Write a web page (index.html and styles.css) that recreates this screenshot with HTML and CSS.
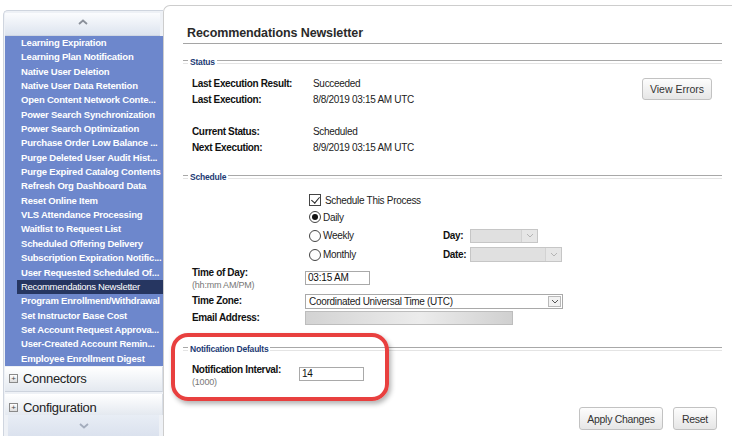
FILE: index.html
```html
<!DOCTYPE html>
<html lang="en">
<head>
    <meta charset="UTF-8">
    <meta name="viewport" content="width=device-width, initial-scale=1.0">
    <title>Recommendations Newsletter</title>
    <link rel="stylesheet" href="styles.css">
</head>
<body>
    <div class="page">
        <div class="sidebar">
            <div class="scroll-up">
                <svg width="10" height="6" viewBox="0 0 10 6"><path d="M1 5 L5 1.5 L9 5" fill="none" stroke="#8b909a" stroke-width="1.8"/></svg>
            </div>
            <ul class="jobs">
                <li>Learning Expiration</li>
                <li>Learning Plan Notification</li>
                <li>Native User Deletion</li>
                <li>Native User Data Retention</li>
                <li>Open Content Network Conte...</li>
                <li>Power Search Synchronization</li>
                <li>Power Search Optimization</li>
                <li>Purchase Order Low Balance ...</li>
                <li>Purge Deleted User Audit Hist...</li>
                <li>Purge Expired Catalog Contents</li>
                <li>Refresh Org Dashboard Data</li>
                <li>Reset Online Item</li>
                <li>VLS Attendance Processing</li>
                <li>Waitlist to Request List</li>
                <li>Scheduled Offering Delivery</li>
                <li>Subscription Expiration Notific...</li>
                <li>User Requested Scheduled Of...</li>
                <li class="active">Recommendations Newsletter</li>
                <li>Program Enrollment/Withdrawal</li>
                <li>Set Instructor Base Cost</li>
                <li>Set Account Request Approva...</li>
                <li>User-Created Account Remin...</li>
                <li>Employee Enrollment Digest</li>
            </ul>
            <div class="group"><span class="plus">+</span>Connectors</div>
            <div class="group cut"><span class="plus">+</span>Configuration</div>
            <div class="scroll-down">
                <svg width="10" height="6" viewBox="0 0 10 6"><path d="M1 1 L5 4.5 L9 1" fill="none" stroke="#a3acbc" stroke-width="1.8"/></svg>
            </div>
        </div>

        <div class="main">
            <h1>Recommendations Newsletter</h1>

            <div class="legend status-legend"><span>Status</span></div>
            <div class="status">
                <div class="rows">
                    <div class="lbl">Last Execution Result:</div><div class="val">Succeeded</div>
                    <div class="lbl">Last Execution:</div><div class="val">8/8/2019 03:15 AM UTC</div>
                    <div class="lbl"></div><div class="val"></div>
                    <div class="lbl">Current Status:</div><div class="val">Scheduled</div>
                    <div class="lbl">Next Execution:</div><div class="val">8/9/2019 03:15 AM UTC</div>
                </div>
                <button class="btn view-errors">View Errors</button>
            </div>

            <div class="legend schedule-legend"><span>Schedule</span></div>
            <div class="schedule">
                <div></div>
                <div class="opt r-check"><span class="check"></span>Schedule This Process</div>
                <div></div>
                <div class="opt r-daily"><span class="radio on"></span>Daily</div>
                <div></div>
                <div class="opt r-weekly">
                    <div class="opt-name"><span class="radio"></span>Weekly</div>
                    <div class="lbl">Day:</div>
                    <div class="dd off day"><span></span><i><svg width="8" height="5" viewBox="0 0 8 5"><path d="M1 1 L4 4 L7 1" fill="none" stroke="#b5b5b5"/></svg></i></div>
                </div>
                <div></div>
                <div class="opt r-monthly">
                    <div class="opt-name"><span class="radio"></span>Monthly</div>
                    <div class="lbl">Date:</div>
                    <div class="dd off date"><span></span><i><svg width="8" height="5" viewBox="0 0 8 5"><path d="M1 1 L4 4 L7 1" fill="none" stroke="#b5b5b5"/></svg></i></div>
                </div>

                <div class="lbl two r-time">Time of Day:<small>(hh:mm AM/PM)</small></div>
                <div class="r-time"><div class="field time">03:15 AM</div></div>

                <div class="lbl r-zone">Time Zone:</div>
                <div class="r-zone"><div class="dd zone"><span>Coordinated Universal Time (UTC)</span><i><svg width="8" height="5" viewBox="0 0 8 5"><path d="M1 1 L4 4 L7 1" fill="none" stroke="#555"/></svg></i></div></div>

                <div class="lbl r-mail">Email Address:</div>
                <div class="r-mail"><div class="field mail"></div></div>
            </div>

            <div class="legend notify-legend"><span>Notification Defaults</span></div>
            <div class="notify">
                <div class="lbl two">Notification Interval:<small>(1000)</small></div>
                <div><div class="field interval">14</div></div>
            </div>

            <div class="actions">
                <button class="btn">Apply Changes</button>
                <button class="btn">Reset</button>
            </div>
        </div>

        <div class="callout"></div>
    </div>
</body>
</html>
```

FILE: styles.css
```css
* {
    padding: 0;
    margin: 0;
    box-sizing: border-box;
}
body {
    width: 732px;
    height: 436px;
    overflow: hidden;
    background: #fff;
    font-family: "Liberation Sans", Arial, sans-serif;
    color: #1a1a1a;
}
.page {
    position: relative;
    display: flex;
    height: 436px;
}

/* left menu */
.sidebar {
    width: 160px;
    margin: 10px 0 0 3px;
    padding: 2px 0 0 1px;
    border-top: 1px solid #cfd5df;
    border-left: 1px solid #cfd5df;
    border-top-left-radius: 5px;
    background: #eef1f6;
    display: flex;
    flex-direction: column;
    overflow: hidden;
}
.scroll-up {
    height: 23px;
    margin-right: 3px;
    background: linear-gradient(#fbfcfe, #dde4ef);
    border-bottom: 1px solid #d0d7e3;
    display: flex;
    justify-content: center;
    padding-top: 6px;
}
.jobs {
    list-style: none;
    background: #6d87cc;
}
.jobs li {
    height: 14.35px;
    line-height: 14.35px;
    padding-left: 16px;
    font-size: 9.5px;
    font-weight: bold;
    letter-spacing: -0.2px;
    color: #fff;
    white-space: nowrap;
    overflow: hidden;
}
.jobs li.active {
    margin-left: 12px;
    padding-left: 4px;
    background: #263661;
    font-weight: normal;
    letter-spacing: -0.3px;
}
.group {
    height: 25px;
    margin-top: 1px;
    background: linear-gradient(#ffffff, #e4e9f0);
    border-bottom: 1px solid #cdd3dd;
    border-right: 1px solid #d8dde5;
    display: flex;
    align-items: center;
    padding-left: 4px;
    font-size: 13px;
    letter-spacing: -0.3px;
    color: #222;
}
.group.cut {
    height: 21px;
    margin-top: 2px;
    align-items: flex-end;
    overflow: hidden;
    border-bottom: none;
}
.group.cut .plus {
    margin-bottom: 3px;
}
.plus {
    width: 9px;
    height: 9px;
    margin-right: 5px;
    border: 1px solid #8a8a8a;
    background: linear-gradient(#fff, #dcdcdc);
    font-size: 8px;
    line-height: 7px;
    text-align: center;
    color: #444;
    letter-spacing: 0;
}
.scroll-down {
    flex: 1;
    margin: 0 4px 0 3px;
    background: linear-gradient(#e8edf5, #dbe2ee);
    display: flex;
    justify-content: center;
    padding-top: 8px;
}

/* main panel */
.main {
    flex: 1;
    margin-top: 5px;
    padding: 18px 10px 0 19px;
    border-top: 1px solid #cdcdcd;
    border-left: 1px solid #cdcdcd;
    border-top-left-radius: 7px;
}
h1 {
    height: 20px;
    line-height: 19px;
    padding-left: 4px;
    font-size: 12.5px;
    letter-spacing: -0.1px;
    color: #2a2a2a;
    border-bottom: 1px solid #a5a5a5;
}
.legend {
    display: flex;
    align-items: center;
    height: 14px;
    font-size: 8.5px;
    font-weight: bold;
    letter-spacing: -0.2px;
    color: #1d3b74;
}
.legend::before,
.legend::after {
    content: "";
    height: 2px;
    border-top: 1px solid #a8a8a8;
    border-bottom: 1px solid #e4e4e4;
}
.legend::before {
    width: 5px;
}
.legend::after {
    flex: 1;
}
.legend span {
    padding: 0 2px;
}
.status-legend {
    margin-top: 11px;
}
.schedule-legend {
    margin-top: 14px;
}
.notify-legend {
    margin-top: 16px;
}

.lbl {
    font-size: 10px;
    font-weight: bold;
    letter-spacing: -0.35px;
    color: #111;
}
.val {
    font-size: 10px;
    letter-spacing: -0.3px;
    color: #222;
}
.lbl small {
    display: block;
    font-size: 9px;
    font-weight: normal;
    letter-spacing: -0.2px;
    color: #777;
}
.lbl.two {
    line-height: 13px;
    padding-top: 2px;
}

.status {
    display: flex;
    justify-content: space-between;
    align-items: flex-start;
    margin-top: 7px;
    padding-left: 9px;
}
.rows {
    display: grid;
    grid-template-columns: 121px auto;
    grid-auto-rows: 16px;
    line-height: 16px;
}
.btn {
    height: 23px;
    padding: 0;
    white-space: nowrap;
    background: linear-gradient(#fdfdfd, #e6e6e6);
    border: 1px solid #c2c2c2;
    border-radius: 3px;
    font-family: "Liberation Sans", Arial, sans-serif;
    font-size: 10.5px;
    letter-spacing: -0.3px;
    color: #333;
}
.view-errors {
    margin: 2px 10px 0 0;
    width: 70px;
    height: 22px;
    letter-spacing: 0;
}

.schedule {
    display: grid;
    grid-template-columns: 113px 1fr;
    margin-top: 8px;
    padding-left: 9px;
}
.opt {
    display: flex;
    align-items: center;
    padding-left: 4px;
    font-size: 10px;
    letter-spacing: -0.3px;
    color: #222;
}
.r-check { height: 16px; }
.r-daily { height: 18px; }
.r-weekly, .r-monthly {
    height: 19px;
    display: grid;
    grid-template-columns: 134px 27px auto;
    align-items: center;
}
.opt-name {
    display: flex;
    align-items: center;
}
.check {
    width: 12px;
    height: 12px;
    margin-right: 4px;
    border: 1px solid #444;
    background: #fff;
    position: relative;
}
.check::after {
    content: "";
    position: absolute;
    left: 3px;
    top: 0px;
    width: 4px;
    height: 7px;
    border-right: 1px solid #222;
    border-bottom: 1px solid #222;
    transform: rotate(40deg);
}
.radio {
    width: 12px;
    height: 12px;
    margin-right: 2px;
    border: 1px solid #444;
    border-radius: 50%;
    background: #fff;
    display: flex;
    align-items: center;
    justify-content: center;
}
.radio.on::after {
    content: "";
    width: 6px;
    height: 6px;
    border-radius: 50%;
    background: #111;
}

.dd {
    display: flex;
    height: 15px;
    border: 1px solid #a9a9a9;
    background: #fff;
    font-size: 10px;
    letter-spacing: -0.3px;
    color: #222;
}
.dd span {
    flex: 1;
    padding-left: 3px;
    line-height: 13px;
    white-space: nowrap;
}
.dd i {
    width: 13px;
    margin: 1px;
    border: 1px solid #b9b9b9;
    background: #f2f2f2;
    display: flex;
    align-items: center;
    justify-content: center;
}
.dd.off {
    border-color: #c6c6c6;
    background: #e0e0e0;
}
.dd.off i {
    border: none;
    border-left: 1px solid #d2d2d2;
    background: #e6e6e6;
    margin: 0;
    width: 16px;
}
.day {
    width: 68px;
    height: 14px;
}
.date {
    width: 92px;
}

.r-time { height: 28px; }
.r-zone, .r-mail {
    height: 17px;
    line-height: 17px;
}
.field {
    height: 14px;
    border: 1px solid #a9a9a9;
    background: #fff;
    padding-left: 2px;
    font-size: 10px;
    line-height: 12px;
    letter-spacing: -0.2px;
    color: #111;
}
.time {
    width: 65px;
    margin-top: 7px;
}
.zone {
    width: 258px;
    margin-top: 2px;
}
.mail {
    width: 208px;
    margin-top: 2px;
    border-color: #bdbdbd;
    background: linear-gradient(90deg, #d3d3d3, #ececec 55%, #d0d0d0);
}

.notify {
    display: grid;
    grid-template-columns: 107px 1fr;
    margin-top: 5px;
    padding-left: 9px;
    height: 27px;
}
.interval {
    width: 65px;
    margin-top: 6px;
}

.actions {
    display: flex;
    justify-content: flex-end;
    gap: 10px;
    margin-top: 19px;
    padding-right: 5px;
}
.actions .btn:first-child {
    width: 84px;
}
.actions .btn:last-child {
    width: 44px;
}

/* red highlight drawn over the form */
.callout {
    position: absolute;
    left: 171px;
    top: 333px;
    width: 218px;
    height: 68px;
    border: 4px solid #e8403f;
    border-radius: 17px;
    box-shadow: 2px 3px 5px rgba(0, 0, 0, 0.3);
}
```
